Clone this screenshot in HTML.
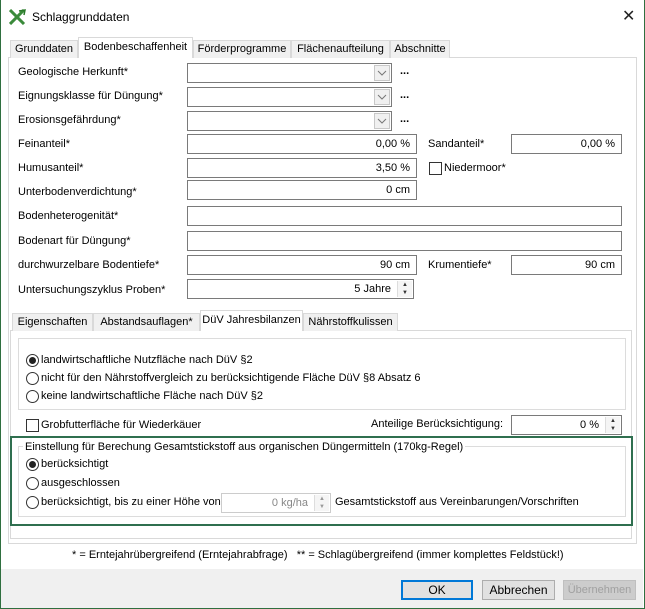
<!DOCTYPE html>
<html><head><meta charset="utf-8"><style>
*{box-sizing:border-box;margin:0;padding:0}
body{width:645px;height:609px;position:relative;background:#fff;font-family:"Liberation Sans",sans-serif;font-size:11px;color:#000;overflow:hidden}
.a{position:absolute;white-space:nowrap}
.in{position:absolute;border:1px solid #7a7a7a;background:#fff;text-align:right;padding-right:6px;line-height:18px;height:20px;white-space:nowrap}
.cb{position:absolute;border:1px solid #7a7a7a;background:#fff;height:20px}
.cb .dd{position:absolute;right:1px;top:1px;width:16px;height:16px;background:#f0f0f0;border:1px solid #c8c8c8}
.dots{position:absolute;font-weight:bold;font-size:11px}
.tab{position:absolute;border:1px solid #d9d9d9;background:#f0f0f0;height:18px;line-height:17px;text-align:center;border-bottom:none;white-space:nowrap}
.tab.s{background:#fff;height:21px;z-index:2;line-height:18px}
.rd{position:absolute;width:13px;height:13px;border:1px solid #333;border-radius:50%;background:#fff}
.rd.on::after{content:"";position:absolute;left:2px;top:2px;width:7px;height:7px;border-radius:50%;background:#222}
.ck{position:absolute;width:13px;height:13px;border:1px solid #333;background:#fff}
.sp{position:absolute;right:1px;top:1px;width:15px;height:16px;border-left:1px solid #ddd;background:#f5f5f5;font-size:6px;line-height:8px;text-align:center;color:#333}
.btn{position:absolute;height:20px;border:1px solid #adadad;background:#e1e1e1;text-align:center;line-height:18px;font-size:12px}
</style></head><body>
<div class="a" style="left:0;top:0;width:645px;height:609px;border:1px solid #2f6f3f;border-top:none"></div>
<svg class="a" style="left:9px;top:9px" width="18" height="16" viewBox="0 0 18 16"><path d="M1 1 L15 15 M15 1 L1 15" stroke="#3a8a3a" stroke-width="3"/><path d="M10 2 L16 1 L15 6" stroke="#2a7a2a" fill="none" stroke-width="1.5"/></svg>
<div class="a" style="left:32px;top:10px;font-size:12px">Schlaggrunddaten</div>
<div class="a" style="left:622px;top:6px;font-size:16px;color:#222">✕</div>

<div class="a" style="left:8px;top:57px;width:629px;height:487px;border:1px solid #d9d9d9"></div>
<div class="tab" style="left:10px;top:40px;width:68px">Grunddaten</div>
<div class="tab s" style="left:78px;top:37px;width:115px">Bodenbeschaffenheit</div>
<div class="tab" style="left:193px;top:40px;width:98px">Förderprogramme</div>
<div class="tab" style="left:291px;top:40px;width:99px">Flächenaufteilung</div>
<div class="tab" style="left:390px;top:40px;width:60px">Abschnitte</div>

<div class="a" style="left:18px;top:66px">Geologische Herkunft*</div>
<div class="cb" style="left:187px;top:63px;width:205px"><div class="dd"><svg width="14" height="14"><path d="M3 5 L7 9 L11 5" stroke="#777" fill="none"/></svg></div></div><div class="dots" style="left:400px;top:65px">...</div>
<div class="a" style="left:18px;top:90px">Eignungsklasse für Düngung*</div>
<div class="cb" style="left:187px;top:87px;width:205px"><div class="dd"><svg width="14" height="14"><path d="M3 5 L7 9 L11 5" stroke="#777" fill="none"/></svg></div></div><div class="dots" style="left:400px;top:89px">...</div>
<div class="a" style="left:18px;top:114px">Erosionsgefährdung*</div>
<div class="cb" style="left:187px;top:111px;width:205px"><div class="dd"><svg width="14" height="14"><path d="M3 5 L7 9 L11 5" stroke="#777" fill="none"/></svg></div></div><div class="dots" style="left:400px;top:113px">...</div>

<div class="a" style="left:18px;top:138px">Feinanteil*</div>
<div class="in" style="left:187px;top:134px;width:230px">0,00 %</div>
<div class="a" style="left:428px;top:138px">Sandanteil*</div>
<div class="in" style="left:511px;top:134px;width:111px">0,00 %</div>
<div class="a" style="left:18px;top:162px">Humusanteil*</div>
<div class="in" style="left:187px;top:158px;width:230px">3,50 %</div>
<div class="ck" style="left:429px;top:162px"></div><div class="a" style="left:444px;top:162px">Niedermoor*</div>
<div class="a" style="left:18px;top:186px">Unterbodenverdichtung*</div>
<div class="in" style="left:187px;top:180px;width:230px">0 cm</div>
<div class="a" style="left:18px;top:210px">Bodenheterogenität*</div>
<div class="in" style="left:187px;top:206px;width:435px"></div>
<div class="a" style="left:18px;top:235px">Bodenart für Düngung*</div>
<div class="in" style="left:187px;top:231px;width:435px"></div>
<div class="a" style="left:18px;top:259px">durchwurzelbare Bodentiefe*</div>
<div class="in" style="left:187px;top:255px;width:230px">90 cm</div>
<div class="a" style="left:428px;top:259px">Krumentiefe*</div>
<div class="in" style="left:511px;top:255px;width:111px">90 cm</div>
<div class="a" style="left:18px;top:284px">Untersuchungszyklus Proben*</div>
<div class="in" style="left:187px;top:279px;width:227px;padding-right:22px">5 Jahre<div class="sp">▲<br>▼</div></div>

<div class="a" style="left:10px;top:330px;width:622px;height:209px;border:1px solid #d9d9d9"></div>
<div class="tab" style="left:12px;top:313px;width:81px">Eigenschaften</div>
<div class="tab" style="left:93px;top:313px;width:107px">Abstandsauflagen*</div>
<div class="tab s" style="left:200px;top:310px;width:103px">DüV Jahresbilanzen</div>
<div class="tab" style="left:303px;top:313px;width:95px">Nährstoffkulissen</div>

<div class="a" style="left:18px;top:338px;width:608px;height:72px;border:1px solid #dcdcdc"></div>
<div class="rd on" style="left:26px;top:354px"></div><div class="a" style="left:41px;top:354px">landwirtschaftliche Nutzfläche nach DüV §2</div>
<div class="rd" style="left:26px;top:372px"></div><div class="a" style="left:41px;top:372px">nicht für den Nährstoffvergleich zu berücksichtigende Fläche DüV §8 Absatz 6</div>
<div class="rd" style="left:26px;top:390px"></div><div class="a" style="left:41px;top:390px">keine landwirtschaftliche Fläche nach DüV §2</div>

<div class="ck" style="left:26px;top:419px"></div><div class="a" style="left:41px;top:419px">Grobfutterfläche für Wiederkäuer</div>
<div class="a" style="left:371px;top:418px">Anteilige Berücksichtigung:</div>
<div class="in" style="left:511px;top:415px;width:111px;padding-right:22px">0 %<div class="sp">▲<br>▼</div></div>

<div class="a" style="left:10px;top:436px;width:623px;height:90px;border:2px solid #2f6f4f"></div>
<div class="a" style="left:18px;top:446px;width:608px;height:71px;border:1px solid #dcdcdc"></div>
<div class="a" style="left:23px;top:441px;background:#fff;padding:0 2px">Einstellung für Berechung Gesamtstickstoff aus organischen Düngermitteln (170kg-Regel)</div>
<div class="rd on" style="left:26px;top:458px"></div><div class="a" style="left:41px;top:458px">berücksichtigt</div>
<div class="rd" style="left:26px;top:477px"></div><div class="a" style="left:41px;top:477px">ausgeschlossen</div>
<div class="rd" style="left:26px;top:496px"></div><div class="a" style="left:41px;top:496px">berücksichtigt, bis zu einer Höhe von</div>
<div class="in" style="left:221px;top:493px;width:110px;padding-right:22px;color:#888;border-color:#ccc">0 kg/ha<div class="sp" style="color:#999">▲<br>▼</div></div>
<div class="a" style="left:335px;top:496px">Gesamtstickstoff aus Vereinbarungen/Vorschriften</div>

<div class="a" style="left:72px;top:549px">* = Erntejahrübergreifend (Erntejahrabfrage)&nbsp;&nbsp;&nbsp;** = Schlagübergreifend (immer komplettes Feldstück!)</div>

<div class="a" style="left:1px;top:569px;width:642px;height:39px;background:#f0f0f0"></div>
<div class="btn" style="left:401px;top:580px;width:72px;border:2px solid #0078d7;line-height:16px">OK</div>
<div class="btn" style="left:482px;top:580px;width:73px">Abbrechen</div>
<div class="btn" style="left:563px;top:580px;width:73px;color:#a0a0a0;background:#ccc;border-color:#bfbfbf;font-size:11px">Übernehmen</div>
</body></html>
